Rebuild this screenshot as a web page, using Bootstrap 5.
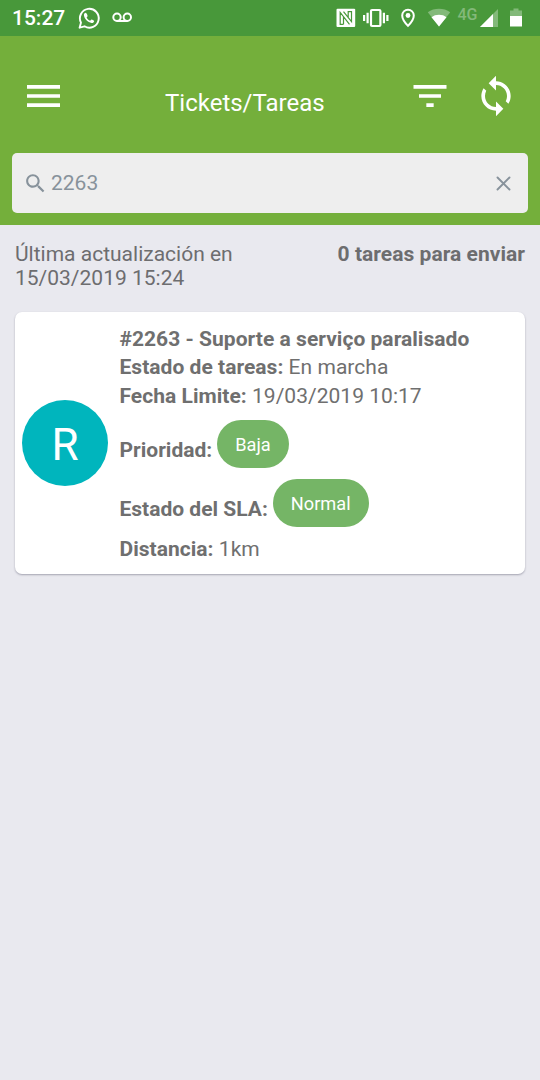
<!DOCTYPE html>
<html lang="es">
<head>
<meta charset="utf-8">
<meta name="viewport" content="width=device-width, initial-scale=1">
<title>Tickets/Tareas</title>
<link href="https://cdn.jsdelivr.net/npm/bootstrap@5.3.0/dist/css/bootstrap.min.css" rel="stylesheet">
<style>
  body { background: #e9e9ef; color: #6d6d6f; font-family: Roboto, "Liberation Sans", sans-serif; font-size: 21px; line-height: 24px; min-height: 1080px; }
  svg { display: block; flex: none; }
  b { font-weight: 700; }
  .status-bar { height: 36px; background: #48983a; padding: 0 12px; }
  .clock { font-size: 21px; font-weight: 500; width: 65px; }
  .net-type { font-size: 16px; line-height: 15px; font-weight: 500; color: #83b97a; width: 22.500px; padding-bottom: 7px; }
  .app-header { background: #74af3b; height: 189px; padding: 0 12px; }
  .toolbar { height: 117px; padding: 38px 10px 0 9px; }
  .app-title { font-size: 24px; line-height: 28px; margin: 15px auto 0 99px; }
  .icon-btn { border: 0; padding: 0; background: none; color: #fff; }
  .search-box { height: 60px; background: #eee; border-radius: 5px; padding: 0 17px 0 11px; color: #87929b; }
  .search-text { line-height: 28px; margin-left: 3px; }
  .sync-row { padding: 17px 15px 0 15px; height: 87px; }
  .sync-time { width: 250px; }
  .ticket { margin: 0 15px; height: 262px; border-radius: 7px; background: #fff; color: #6f6f6f; box-shadow: 0 1px 2px rgba(50,50,75,.38); padding: 13px 8px 0 7px; }
  .avatar { width: 86px; height: 86px; background: #00b5bd; color: #fff; font-size: 44px; margin: 74.500px 11.500px 0 0; padding-top: 5px; }
  .ticket-title { letter-spacing: .03px; }
  .ticket-line { line-height: 28.500px; letter-spacing: .03px; }
  .pill-line { line-height: 28px; }
  .pill { height: 48px; border-radius: 24px; background: #75b566; color: #fff; font-size: 18.200px; line-height: 50px; padding: 0 18px; margin-left: 5px; }
</style>
</head>
<body>
<header>
  <div class="status-bar d-flex align-items-center text-white">
    <span class="clock">15:27</span>
    <svg width="24" height="24" viewBox="0 0 24 24" fill="none">
      <path d="M2.600 21.700l1.400-5.100A9.400 9.400 0 1 1 7.500 20.300z" stroke="#fff" stroke-width="1.900" stroke-linejoin="round"/>
      <path d="M8.500 6.800c-.7 0-1.700 1-1.600 2.300.2 3.600 4.100 7.500 7.700 7.900 1.300.1 2.500-.9 2.600-2.100 0-.4-2.400-1.700-2.800-1.500l-1.300 1.400c-1.400-.5-2.900-2-3.500-3.300l1-1.200c.2-.4-.9-3.500-2.100-3.500z" fill="#fff"/>
    </svg>
    <svg class="ms-2" width="24" height="24" viewBox="0 0 24 24" fill="none" stroke="#fff" stroke-width="2">
      <circle cx="8" cy="11.300" r="3.700"/><circle cx="18.300" cy="11.300" r="3.700"/><path d="M8 15h10.300"/>
    </svg>
    <div class="d-flex align-items-center ms-auto">
      <svg width="20" height="20" viewBox="0 0 20 20" style="margin-right:7px">
        <rect x=".5" y=".8" width="18.700" height="18.200" rx="1" fill="#fff"/>
        <path d="M7.500 16.300H4.200V4.500L13.500 16.300M7.500 9v7.300M7.500 3.600l8 10V3.600h-3.300V9" fill="none" stroke="#48983a" stroke-width="1.200"/>
      </svg>
      <svg width="26" height="20" viewBox="0 0 26 20" style="margin-right:10px" fill="none" stroke="#fff">
        <rect x="8" y="2" width="9.400" height="16" rx="1" stroke-width="2.200"/>
        <path d="M1.100 7v6M4.600 4.800v10.400M20.900 4.800v10.400M24.400 7v6" stroke-width="2.200"/>
      </svg>
      <svg width="18" height="20" viewBox="0 0 18 20" style="margin-right:10px">
        <path d="M9 1.700a5.800 5.800 0 0 0-5.800 5.800C3.200 12 9 17.900 9 17.900s5.800-5.900 5.800-10.400A5.800 5.800 0 0 0 9 1.700z" fill="none" stroke="#fff" stroke-width="2"/><circle cx="9" cy="7.500" r="2.400" fill="#fff"/>
      </svg>
      <svg width="24" height="20" viewBox="0 0 24 20" style="margin-right:6.500px">
        <path d="M12 18.500L.8 4.200C7-.3 17-.3 23.200 4.200z" fill="#83b97a"/><path d="M12 18.500L4.500 9.200c3.900-3.300 11.100-3.300 15 0z" fill="#fff"/>
      </svg>
      <span class="net-type">4G</span>
      <svg width="18" height="20" viewBox="0 0 18 20" style="margin-right:11px">
        <path d="M0 19L18 1v18z" fill="#83b97a"/><path d="M0 19L13 6v13z" fill="#fff"/>
      </svg>
      <svg width="14" height="20" viewBox="0 0 14 20" style="margin-right:5px">
        <path d="M1 8V2.500h3.500V.5h5v2H13V8z" fill="#83b97a"/><path d="M1 8h12v10.500H1z" fill="#fff"/>
      </svg>
    </div>
  </div>
  <div class="app-header">
    <nav class="toolbar d-flex align-items-start text-white">
      <button class="icon-btn" aria-label="Menú"><svg width="45" height="44" viewBox="0 0 24 24" fill="currentColor"><path d="M3 18h18v-2H3v2zm0-5h18v-2H3v2zm0-7v2h18V6H3z"/></svg></button>
      <h1 class="app-title fw-normal">Tickets/Tareas</h1>
      <button class="icon-btn" aria-label="Filtrar"><svg width="44" height="44" viewBox="0 0 24 24" fill="currentColor"><path d="M10 18h4v-2h-4v2zM3 6v2h18V6H3zm3 7h12v-2H6v2z"/></svg></button>
      <button class="icon-btn" aria-label="Sincronizar" style="margin-left:22px"><svg width="44" height="44" viewBox="0 0 24 24" fill="currentColor"><path d="M12 4V1L8 5l4 4V6c3.310 0 6 2.690 6 6 0 1.010-.25 1.970-.7 2.800l1.460 1.460C19.540 15.030 20 13.570 20 12c0-4.420-3.580-8-8-8zm0 14c-3.310 0-6-2.690-6-6 0-1.010.25-1.970.7-2.800L5.240 7.740C4.460 8.970 4 10.430 4 12c0 4.420 3.580 8 8 8v3l4-4-4-4v3z"/></svg></button>
    </nav>
    <div class="search-box d-flex align-items-center">
      <svg width="25" height="25" viewBox="0 0 24 24" fill="currentColor"><path d="M15.500 14h-.79l-.28-.27C15.410 12.590 16 11.110 16 9.500 16 5.910 13.090 3 9.500 3S3 5.910 3 9.500 5.910 16 9.500 16c1.610 0 3.090-.59 4.230-1.570l.27.28v.79l5 4.990L20.490 19l-4.990-5zm-6 0C7.010 14 5 11.990 5 9.500S7.010 5 9.500 5 14 7.010 14 9.500 11.990 14 9.500 14z"/></svg>
      <span class="search-text flex-grow-1">2263</span>
      <svg width="15" height="15" viewBox="0 0 15 15" stroke="currentColor" stroke-width="1.900" stroke-linecap="round"><path d="M1.500 1.500l12 12M13.500 1.500l-12 12"/></svg>
    </div>
  </div>
</header>
<main>
  <div class="sync-row d-flex justify-content-between">
    <div class="sync-time">Última actualización en 15/03/2019 15:24</div>
    <b class="ticket-title">0 tareas para enviar</b>
  </div>
  <article class="ticket d-flex flex-row align-items-start">
    <div class="avatar rounded-circle d-flex align-items-center justify-content-center">R</div>
    <div>
      <div class="ticket-line"><b>#2263 - Suporte a serviço paralisado</b></div>
      <div class="ticket-line" style="margin-top:-.5px"><b>Estado de tareas:</b> En marcha</div>
      <div class="ticket-line"><b>Fecha Limite:</b> 19/03/2019 10:17</div>
      <div class="pill-line d-flex align-items-end" style="margin-top:9.500px"><b class="mb-1">Prioridad:</b><span class="pill">Baja</span></div>
      <div class="pill-line d-flex align-items-end" style="margin-top:11.500px"><b class="mb-1">Estado del SLA:</b><span class="pill">Normal</span></div>
      <div class="ticket-line" style="margin-top:7.500px"><b>Distancia:</b> 1km</div>
    </div>
  </article>
</main>
<script src="https://cdn.jsdelivr.net/npm/bootstrap@5.3.0/dist/js/bootstrap.bundle.min.js"></script>
</body>
</html>
